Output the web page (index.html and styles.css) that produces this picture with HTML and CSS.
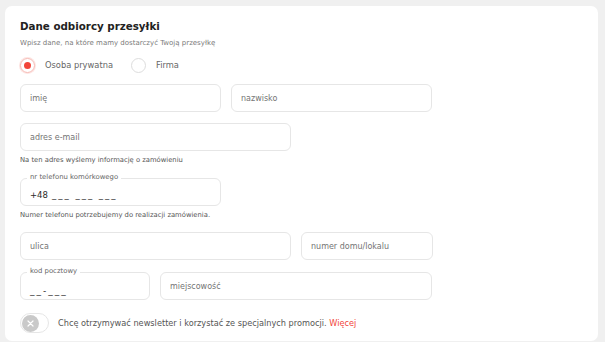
FILE: index.html
```html
<!DOCTYPE html>
<html lang="pl">
<head>
    <meta charset="UTF-8">
    <meta name="viewport" content="width=device-width, initial-scale=1.0">
    <title>Dane odbiorcy przesyłki</title>
    <link rel="stylesheet" href="styles.css">
</head>
<body>
    <div class="card">
        <h2 class="card-title">Dane odbiorcy przesyłki</h2>
        <p class="card-lead">Wpisz dane, na które mamy dostarczyć Twoją przesyłkę</p>

        <div class="radio-row">
            <label class="radio">
                <span class="radio-dot radio-checked"></span>
                <span class="radio-label">Osoba prywatna</span>
            </label>
            <label class="radio">
                <span class="radio-dot"></span>
                <span class="radio-label">Firma</span>
            </label>
        </div>

        <div class="row row-names">
            <input class="field" type="text" placeholder="imię">
            <input class="field" type="text" placeholder="nazwisko">
        </div>

        <div class="row row-email">
            <input class="field field-wide" type="email" placeholder="adres e-mail">
        </div>
        <p class="hint">Na ten adres wyślemy informację o zamówieniu</p>

        <div class="row row-phone">
            <div class="float-field">
                <span class="float-label">nr telefonu komórkowego</span>
                <div class="field field-filled field-phone">
                    <span class="prefix">+48</span><span class="mask">___ ___ ___</span>
                </div>
            </div>
        </div>
        <p class="hint">Numer telefonu potrzebujemy do realizacji zamówienia.</p>

        <div class="row row-street">
            <input class="field field-wide" type="text" placeholder="ulica">
            <input class="field field-house" type="text" placeholder="numer domu/lokalu">
        </div>

        <div class="row row-city">
            <div class="float-field">
                <span class="float-label">kod pocztowy</span>
                <div class="field field-filled field-zipcode">
                    <span class="mask">__-___</span>
                </div>
            </div>
            <input class="field field-town" type="text" placeholder="miejscowość">
        </div>

        <div class="newsletter">
            <span class="toggle">
                <span class="toggle-knob">
                    <svg width="7" height="7" viewBox="0 0 7 7"><path d="M1 1L6 6M6 1L1 6" stroke="#ffffff" stroke-width="1.2" stroke-linecap="round"/></svg>
                </span>
            </span>
            <span class="newsletter-text">Chcę otrzymywać newsletter i korzystać ze specjalnych promocji. <a href="#" class="more-link">Więcej</a></span>
        </div>
    </div>
</body>
</html>
```

FILE: styles.css
```css
body {
    margin: 0;
    padding: 6px 7px 0 5px;
    background: #f0f0f0;
    font-family: 'DejaVu Sans', 'Open Sans', sans-serif;
    color: #333333;
    height: 342px;
    box-sizing: border-box;
    overflow: hidden;
}

.card {
    background: #ffffff;
    border-radius: 7px;
    padding: 13px 15px 0 15px;
    height: 335px;
    box-sizing: border-box;
}

.card-title {
    margin: 0;
    font-size: 10.3px;
    line-height: 14px;
    font-weight: 700;
    color: #222222;
}

.card-lead {
    margin: 5px 0 0 0;
    font-size: 7px;
    line-height: 10px;
    color: #7a7a7a;
}

.radio-row {
    display: flex;
    align-items: center;
    margin-top: 9px;
    height: 16px;
}

.radio {
    display: flex;
    align-items: center;
    margin-right: 18px;
}

.radio-dot {
    width: 13px;
    height: 13px;
    border: 1px solid #dddddd;
    border-radius: 50%;
    margin-right: 10px;
    position: relative;
}

.radio-checked {
    border-color: #f6b8b2;
    box-shadow: 0 0 0 1px #fde4e2;
}

.radio-checked::after {
    content: "";
    position: absolute;
    left: 3px;
    top: 3px;
    width: 7px;
    height: 7px;
    border-radius: 50%;
    background: #f2453a;
}

.radio-label {
    font-size: 8.3px;
    color: #666666;
}

.row {
    display: flex;
    gap: 10px;
}

.row-names { margin-top: 11px; }
.row-email { margin-top: 11px; }
.row-phone { margin-top: 13px; }
.row-street { margin-top: 12px; }
.row-city { margin-top: 12px; }

.field {
    width: 201px;
    height: 28px;
    box-sizing: border-box;
    border: 1px solid #e6e6e6;
    border-radius: 6px;
    padding: 0 9px;
    font-family: inherit;
    font-size: 8px;
    color: #333333;
    background: #ffffff;
    outline: none;
}

.field::placeholder {
    color: #747474;
}

.field-wide { width: 271px; }
.field-house { width: 132px; }
.field-town { width: 272px; }

.field-filled {
    display: flex;
    align-items: center;
    padding-top: 5px;
    color: #2a2a2a;
}

.field-phone {
    font-size: 8.5px;
}

.field-phone .prefix {
    margin-right: 4px;
}

.mask {
    letter-spacing: 2px;
}

.field-zipcode {
    width: 130px;
    padding-top: 9px;
    font-size: 9px;
}

.float-field {
    position: relative;
}

.float-label {
    position: absolute;
    left: 7px;
    top: -5px;
    padding: 0 3px;
    background: #ffffff;
    font-size: 6.9px;
    line-height: 9px;
    color: #666666;
}

.hint {
    margin: 5px 0 0 0;
    font-size: 6.8px;
    line-height: 9px;
    color: #555555;
}

.newsletter {
    display: flex;
    align-items: center;
    margin-top: 13px;
}

.toggle {
    width: 29px;
    height: 20px;
    box-sizing: border-box;
    border: 1px solid #e6e6e6;
    border-radius: 10px;
    display: flex;
    align-items: center;
    padding-left: 1px;
    margin-right: 9px;
}

.toggle-knob {
    width: 17px;
    height: 17px;
    border-radius: 50%;
    background: #c9c9c9;
    display: flex;
    align-items: center;
    justify-content: center;
}

.newsletter-text {
    font-size: 8.2px;
    color: #555555;
}

.more-link {
    color: #f2453a;
    text-decoration: none;
}
```
